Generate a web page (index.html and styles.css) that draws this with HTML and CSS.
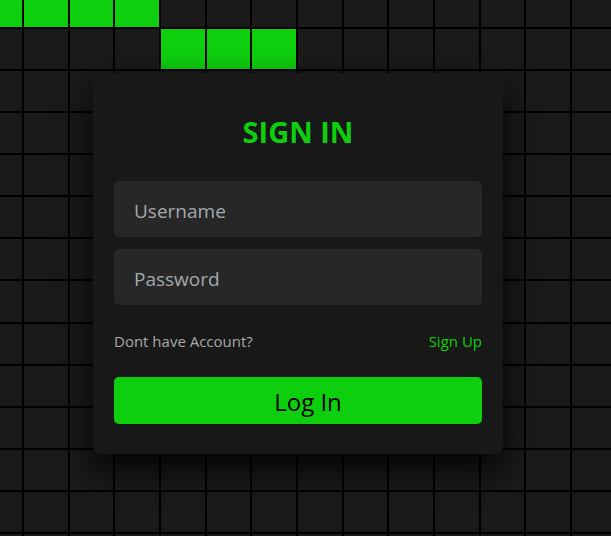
FILE: index.html
```html
<!DOCTYPE html>
<html lang="en">
<head>
<meta charset="utf-8">
<title>Sign In</title>
<link rel="stylesheet" href="styles.css">
</head>
<body>
<section class="grid">
<span class="cell on"></span><span class="cell on"></span><span class="cell on"></span><span class="cell on"></span><span class="cell"></span><span class="cell"></span><span class="cell"></span><span class="cell"></span><span class="cell"></span><span class="cell"></span><span class="cell"></span><span class="cell"></span><span class="cell"></span><span class="cell"></span>
<span class="cell"></span><span class="cell"></span><span class="cell"></span><span class="cell"></span><span class="cell on"></span><span class="cell on"></span><span class="cell on"></span><span class="cell"></span><span class="cell"></span><span class="cell"></span><span class="cell"></span><span class="cell"></span><span class="cell"></span><span class="cell"></span>
<span class="cell"></span><span class="cell"></span><span class="cell"></span><span class="cell"></span><span class="cell"></span><span class="cell"></span><span class="cell"></span><span class="cell"></span><span class="cell"></span><span class="cell"></span><span class="cell"></span><span class="cell"></span><span class="cell"></span><span class="cell"></span>
<span class="cell"></span><span class="cell"></span><span class="cell"></span><span class="cell"></span><span class="cell"></span><span class="cell"></span><span class="cell"></span><span class="cell"></span><span class="cell"></span><span class="cell"></span><span class="cell"></span><span class="cell"></span><span class="cell"></span><span class="cell"></span>
<span class="cell"></span><span class="cell"></span><span class="cell"></span><span class="cell"></span><span class="cell"></span><span class="cell"></span><span class="cell"></span><span class="cell"></span><span class="cell"></span><span class="cell"></span><span class="cell"></span><span class="cell"></span><span class="cell"></span><span class="cell"></span>
<span class="cell"></span><span class="cell"></span><span class="cell"></span><span class="cell"></span><span class="cell"></span><span class="cell"></span><span class="cell"></span><span class="cell"></span><span class="cell"></span><span class="cell"></span><span class="cell"></span><span class="cell"></span><span class="cell"></span><span class="cell"></span>
<span class="cell"></span><span class="cell"></span><span class="cell"></span><span class="cell"></span><span class="cell"></span><span class="cell"></span><span class="cell"></span><span class="cell"></span><span class="cell"></span><span class="cell"></span><span class="cell"></span><span class="cell"></span><span class="cell"></span><span class="cell"></span>
<span class="cell"></span><span class="cell"></span><span class="cell"></span><span class="cell"></span><span class="cell"></span><span class="cell"></span><span class="cell"></span><span class="cell"></span><span class="cell"></span><span class="cell"></span><span class="cell"></span><span class="cell"></span><span class="cell"></span><span class="cell"></span>
<span class="cell"></span><span class="cell"></span><span class="cell"></span><span class="cell"></span><span class="cell"></span><span class="cell"></span><span class="cell"></span><span class="cell"></span><span class="cell"></span><span class="cell"></span><span class="cell"></span><span class="cell"></span><span class="cell"></span><span class="cell"></span>
<span class="cell"></span><span class="cell"></span><span class="cell"></span><span class="cell"></span><span class="cell"></span><span class="cell"></span><span class="cell"></span><span class="cell"></span><span class="cell"></span><span class="cell"></span><span class="cell"></span><span class="cell"></span><span class="cell"></span><span class="cell"></span>
<span class="cell"></span><span class="cell"></span><span class="cell"></span><span class="cell"></span><span class="cell"></span><span class="cell"></span><span class="cell"></span><span class="cell"></span><span class="cell"></span><span class="cell"></span><span class="cell"></span><span class="cell"></span><span class="cell"></span><span class="cell"></span>
<span class="cell"></span><span class="cell"></span><span class="cell"></span><span class="cell"></span><span class="cell"></span><span class="cell"></span><span class="cell"></span><span class="cell"></span><span class="cell"></span><span class="cell"></span><span class="cell"></span><span class="cell"></span><span class="cell"></span><span class="cell"></span>
<span class="cell"></span><span class="cell"></span><span class="cell"></span><span class="cell"></span><span class="cell"></span><span class="cell"></span><span class="cell"></span><span class="cell"></span><span class="cell"></span><span class="cell"></span><span class="cell"></span><span class="cell"></span><span class="cell"></span><span class="cell"></span>
<span class="cell"></span><span class="cell"></span><span class="cell"></span><span class="cell"></span><span class="cell"></span><span class="cell"></span><span class="cell"></span><span class="cell"></span><span class="cell"></span><span class="cell"></span><span class="cell"></span><span class="cell"></span><span class="cell"></span><span class="cell"></span>
</section>
<div class="signin">
  <h2 class="title">SIGN IN</h2>
  <form class="form">
    <input class="field" type="text" placeholder="Username">
    <input class="field" type="password" placeholder="Password">
    <div class="links">
      <span class="muted">Dont have Account?</span>
      <a class="signup" href="#">Sign Up</a>
    </div>
    <button class="btn" type="button">Log In</button>
  </form>
</div>
</body>
</html>
```

FILE: styles.css
```css
html, body {
  margin: 0;
  padding: 0;
  height: 100%;
  overflow: hidden;
  background: #000;
  font-family: "Open Sans", "Noto Sans", sans-serif;
}

.grid {
  display: grid;
  grid-template-columns: repeat(14, 43.67px);
  grid-auto-rows: 40.08px;
  gap: 2px;
  margin-left: -21.67px;
  margin-top: -13.08px;
  height: 549px;
  overflow: hidden;
}

.cell {
  background: #1a1a1a;
}

.cell.on {
  background: #0ecf0e;
}

.signin {
  position: absolute;
  left: 93px;
  top: 73px;
  width: 410px;
  height: 381px;
  box-sizing: border-box;
  padding: 39px 21px 30px;
  background: #181818;
  border-radius: 8px;
  box-shadow: 0 15px 35px rgba(0, 0, 0, 0.9);
  display: flex;
  flex-direction: column;
}

.title {
  margin: 0;
  height: 40px;
  line-height: 40px;
  text-align: center;
  color: #0ecf0e;
  font-size: 29px;
  font-weight: 700;
}

.form {
  margin-top: 29px;
  display: flex;
  flex-direction: column;
}

.field {
  height: 56px;
  box-sizing: border-box;
  border: none;
  outline: none;
  border-radius: 5px;
  background: #272727;
  padding: 3px 20px 0;
  font-family: inherit;
  font-size: 19px;
  color: #fff;
  margin-bottom: 12px;
}

.field::placeholder {
  color: #a2a9b0;
}

.links {
  margin-top: 14px;
  height: 20px;
  display: flex;
  justify-content: space-between;
  align-items: center;
  font-size: 15px;
}

.muted {
  color: #a9a9a9;
}

.signup {
  color: #0ecf0e;
  text-decoration: none;
}

.btn {
  margin-top: 26px;
  height: 47px;
  border: none;
  border-radius: 5px;
  background: #0ecf0e;
  color: #000;
  font-family: inherit;
  font-size: 24px;
  padding: 2px 0 0 20px;
}
```
